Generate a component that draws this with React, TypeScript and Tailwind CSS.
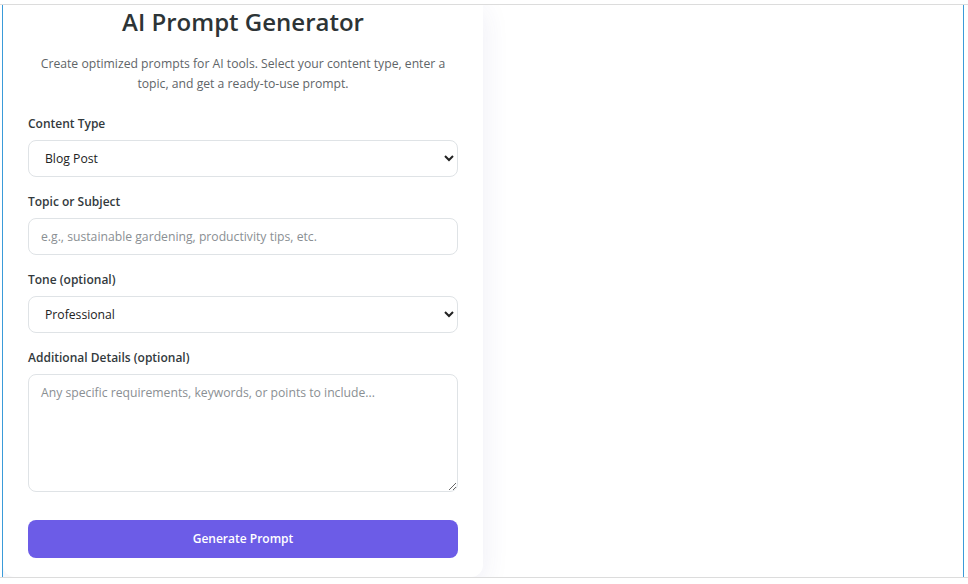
import { useState } from "react";

const CONTENT_TYPES = ["Blog Post", "Social Media Post", "Email", "Product Description", "Video Script"];
const TONES = ["Professional", "Casual", "Friendly", "Persuasive", "Humorous"];

export default function App() {
  const [type, setType] = useState(CONTENT_TYPES[0]);
  const [topic, setTopic] = useState("");
  const [tone, setTone] = useState(TONES[0]);
  const [details, setDetails] = useState("");

  const label = "mb-[7px] block text-[12px] leading-[18px] font-semibold text-[#333a3d]";
  const field =
    "w-full rounded-lg border border-[#dfe3e6] bg-white px-3 text-[12.2px] text-[#222] outline-none placeholder:text-[#8a8f93]";

  return (
    <div className="h-[584px] w-[968px] bg-white pt-1 font-['Open_Sans',sans-serif]">
      <div className="border-y border-[#dcdcdc]">
        <div className="ml-[2px] h-[572px] w-[962px] overflow-hidden border-x border-[#3a9bd9] bg-white">
          <div className="flex h-[572px] w-[480px] flex-col rounded-b-xl bg-white px-[25px] pt-[1px] shadow-[0_6px_28px_rgba(60,50,140,0.09)]">
            <h1 className="text-center text-[24px] leading-[31px] font-semibold text-[#2d3436]">
              AI Prompt Generator
            </h1>
            <p className="mx-auto mt-[17px] max-w-[420px] text-center text-[12.2px] leading-[20px] text-[#5f6568]">
              Create optimized prompts for AI tools. Select your content type, enter a topic, and get a
              ready-to-use prompt.
            </p>

            <div className="mt-[21px] flex flex-col gap-[16px]">
              <div>
                <label className={label}>Content Type</label>
                <select className={`${field} h-[37px]`} value={type} onChange={(e) => setType(e.target.value)}>
                  {CONTENT_TYPES.map((t) => (
                    <option key={t}>{t}</option>
                  ))}
                </select>
              </div>
              <div>
                <label className={label}>Topic or Subject</label>
                <input
                  className={`${field} h-[37px]`}
                  placeholder="e.g., sustainable gardening, productivity tips, etc."
                  value={topic}
                  onChange={(e) => setTopic(e.target.value)}
                />
              </div>
              <div>
                <label className={label}>Tone (optional)</label>
                <select className={`${field} h-[37px]`} value={tone} onChange={(e) => setTone(e.target.value)}>
                  {TONES.map((t) => (
                    <option key={t}>{t}</option>
                  ))}
                </select>
              </div>
              <div>
                <label className={label}>Additional Details (optional)</label>
                <textarea
                  className={`${field} block h-[118px] py-[9px] leading-[18px]`}
                  placeholder="Any specific requirements, keywords, or points to include..."
                  value={details}
                  onChange={(e) => setDetails(e.target.value)}
                />
              </div>
            </div>

            <button className="mt-[28px] h-[38px] w-full rounded-lg bg-[#6c5ce7] text-[12px] font-semibold text-white">
              Generate Prompt
            </button>
          </div>
        </div>
      </div>
    </div>
  );
}
